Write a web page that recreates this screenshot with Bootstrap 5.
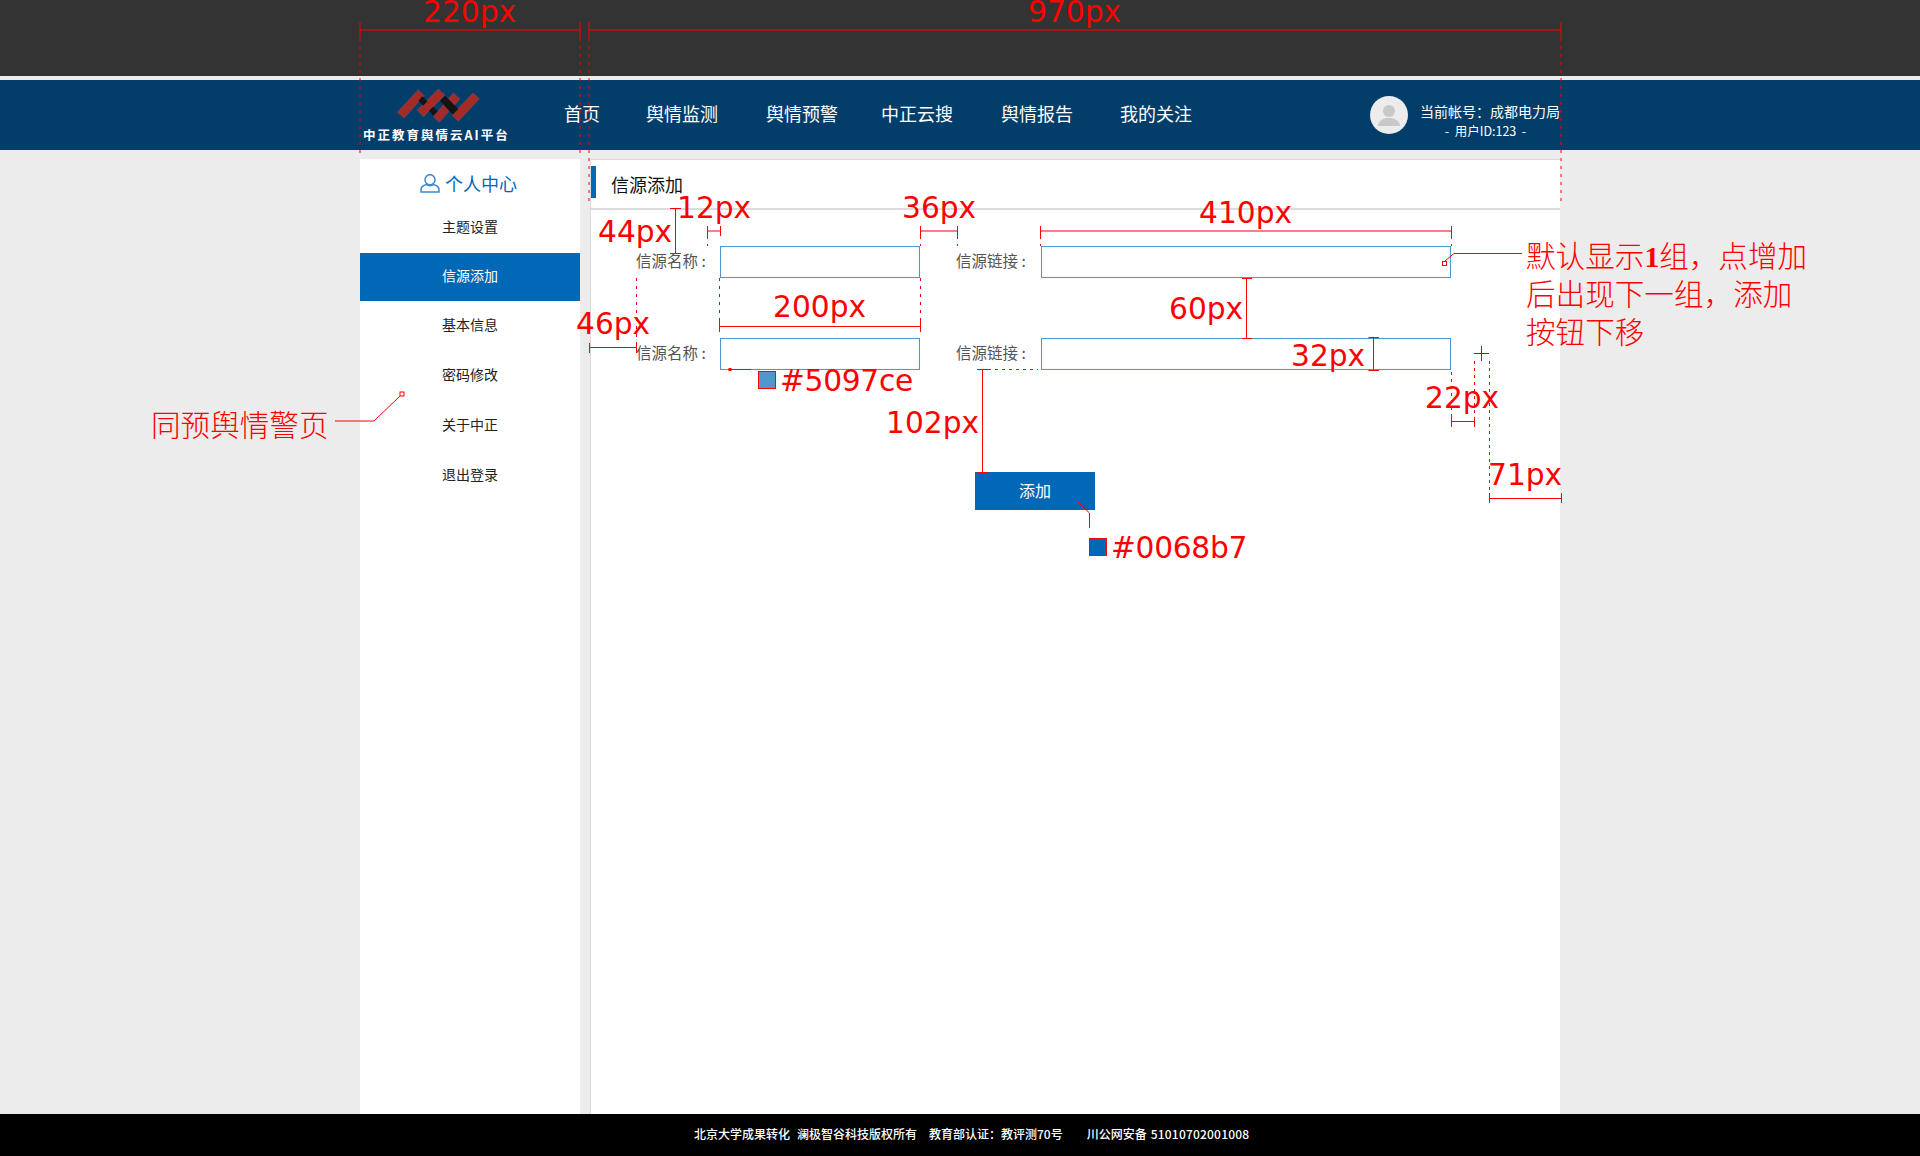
<!DOCTYPE html>
<html lang="zh">
<head>
<meta charset="utf-8">
<link href="https://cdn.jsdelivr.net/npm/bootstrap@5.3.0/dist/css/bootstrap.min.css" rel="stylesheet">
<style>
html,body{height:100%;}
body{background:#ececec;font-family:"Noto Sans CJK SC","Liberation Sans",sans-serif;position:relative;min-height:1156px;overflow:hidden;}
.topdark{height:76px;background:#333;}
.topgap{height:4px;background:#ececec;}
.hdr{height:70px;background:#033e6b;color:#fff;}
.wrap{width:1200px;margin-left:360px;}
.logo-box{width:204px;height:70px;flex:none;}
.logo-svg{position:absolute;left:37px;top:9px;}
.logo-txt{position:absolute;left:3px;top:46px;font-size:12.5px;font-weight:700;letter-spacing:2px;line-height:18px;white-space:nowrap;}
.mainnav{margin-top:-5px;}
.mainnav a{color:#fff;font-size:18px;line-height:26px;text-decoration:none;white-space:nowrap;}
.mainnav a.g1{margin-left:46px}.mainnav a.g2{margin-left:48px}.mainnav a.g3{margin-left:43px}.mainnav a.g4{margin-left:48px}.mainnav a.g5{margin-left:47px}
.acct{margin-left:auto;width:190px;}
.avatar{width:38px;height:38px;border-radius:50%;background:#ececec;flex:none;overflow:hidden;}
.acct-txt{margin-top:11px;}
.acct-l1{font-size:14px;line-height:20px;white-space:nowrap;}
.acct-l2{font-size:12.5px;line-height:20px;text-align:center;white-space:pre;padding-right:9px;}
.body-row{height:964px;padding-top:9px;}
.side{width:220px;height:955px;background:#fff;flex:none;}
.side-title{height:44px;padding:4px 3px 0 0;gap:5px;color:#0068b7;font-size:18px;line-height:40px;}
.side-item{height:50px;line-height:46px;font-size:14px;color:#222;text-align:center;display:block;text-decoration:none;}
.side-item.on{height:48px;line-height:45px;background:#0068b7;color:#fff;}
.main-col{width:970px;height:955px;margin-left:10px;background:#fff;border-left:1px solid #dcdcdc;border-top:1px solid #dcdcdc;flex:none;}
.title-bar{height:50px;border-bottom:2px solid #dcdcdc;padding:6px 0 0 0;}
.title-mark{width:5px;height:32px;background:#0068b7;}
.title-txt{font-size:18px;color:#111;margin-left:15px;line-height:36px;}
.form-area{padding-top:36px;padding-left:45px;}
.frow{height:32px;margin-bottom:60px;}
.frow:last-of-type{margin-bottom:0;}
.flabel{width:84px;font-size:15.5px;color:#555;line-height:28px;white-space:pre;flex:none;}
.flabel2{width:85px;margin-left:36px;}
.finput{height:32px;border:1px solid #5097ce;border-radius:0;background:#fff;padding:0 6px;box-shadow:inset 0 0 3px rgba(80,151,206,.15);flex:none;}
.w200{width:200px;}.w410{width:410px;}
.addbtn{width:120px;height:38px;margin:102px 0 0 339px;background:#0068b7;color:#fff;border:0;border-radius:0;font-size:16px;padding:0 0 3px;line-height:32px;display:block;}
.foot{height:42px;background:#000;color:#fff;font-size:12px;line-height:40px;font-weight:500;padding-left:694px;white-space:nowrap;}
.foot-a{margin-left:7px;}.foot-b{margin-left:12px;}.foot-c{margin-left:24px;}.foot-d{margin-left:4px;letter-spacing:.2px;}
.anno{position:absolute;inset:0;pointer-events:none;}
.ntxt{position:absolute;color:#f00;font-family:"DejaVu Sans",sans-serif;font-size:29.7px;line-height:34px;white-space:nowrap;}
.ntxt.hexv{letter-spacing:-.3px;}
.ntxt-cn{position:absolute;color:#f00;font-family:"Noto Sans CJK SC",sans-serif;font-weight:300;font-size:29.6px;line-height:38px;white-space:nowrap;}
.one{font-family:"Liberation Serif",serif;font-weight:700;line-height:0;}
.swatch{position:absolute;width:18px;height:18px;border:1px solid #f00;}
.sw1{left:758px;top:371px;background:#5097ce;}
.sw2{left:1089px;top:538px;background:#0068b7;}
</style>
</head>
<body>
<div class="topdark"></div>
<div class="topgap"></div>
<header class="hdr">
  <div class="wrap d-flex align-items-center h-100">
    <div class="logo-box position-relative">
      <svg class="logo-svg" width="84" height="36" viewBox="0 0 84 36">
        <g fill="#a52b27" stroke="#6f5560" stroke-width=".5"><polygon points="0.300,23.300 21.300,0.700 27.300,6.700 7,29"/><polygon points="20.300,21 41.300,0 48,6 26.300,27.700"/><polygon points="36.300,27.700 56.300,4 63,10 42.300,33.300"/><polygon points="54.700,25.700 76.300,4 82.300,10 61.300,32.300"/></g>
        <g fill="#141414"><polygon points="21.300,11.700 25.300,7.300 30.300,12.300 26.300,16.700"/><polygon points="32,21.700 36.300,17.700 40.700,22.300 36.300,26.700"/><polygon points="43,11.700 48,6.700 61.300,20 55.700,25.700"/></g>
      </svg>
      <div class="logo-txt">中正教育舆情云AI平台</div>
    </div>
    <nav class="mainnav d-flex">
      <a href="#">首页</a><a class="g1" href="#">舆情监测</a><a class="g2" href="#">舆情预警</a><a class="g3" href="#">中正云搜</a><a class="g4" href="#">舆情报告</a><a class="g5" href="#">我的关注</a>
    </nav>
    <div class="acct d-flex align-items-center">
      <div class="avatar"><svg width="38" height="38" viewBox="0 0 38 38"><circle cx="19" cy="15" r="6" fill="#c8c8c8"/><path d="M8 30c0-5 5-7 8-8h6c3 1 8 3 8 8z" fill="#c8c8c8"/></svg></div>
      <div class="ms-2 ps-1 acct-txt">
        <div class="acct-l1">当前帐号：成都电力局</div>
        <div class="acct-l2">-  用户ID:123  -</div>
      </div>
    </div>
  </div>
</header>
<div class="body-row">
  <div class="wrap d-flex">
    <aside class="side">
      <div class="side-title d-flex justify-content-center align-items-center">
        <svg width="20" height="19" viewBox="0 0 20 19" fill="none" stroke="#3a8ad0" stroke-width="1.500"><ellipse cx="10" cy="5.700" rx="5" ry="5"/><path d="M6.500 10.500C3 11.500 1 13 1 15.500V18H19V15.500C19 13 17 11.500 13.500 10.500C12 12 8 12 6.500 10.500Z"/></svg>
        <span>个人中心</span>
      </div>
      <a class="side-item" href="#">主题设置</a>
      <a class="side-item on" href="#">信源添加</a>
      <a class="side-item" href="#">基本信息</a>
      <a class="side-item" href="#">密码修改</a>
      <a class="side-item" href="#">关于中正</a>
      <a class="side-item" href="#">退出登录</a>
    </aside>
    <main class="main-col">
      <div class="title-bar d-flex"><div class="title-mark"></div><div class="title-txt">信源添加</div></div>
      <div class="form-area">
        <div class="frow d-flex">
          <div class="flabel">信源名称 :</div><div class="finput w200"></div>
          <div class="flabel flabel2">信源链接 :</div><div class="finput w410"></div>
        </div>
        <div class="frow d-flex">
          <div class="flabel">信源名称 :</div><div class="finput w200"></div>
          <div class="flabel flabel2">信源链接 :</div><div class="finput w410"></div>
        </div>
        <button type="button" class="btn addbtn">添加</button>
      </div>
    </main>
  </div>
</div>
<footer class="foot"><span>北京大学成果转化</span><span class="foot-a">澜极智谷科技版权所有</span><span class="foot-b">教育部认证：教评测70号</span><span class="foot-c">川公网安备</span><span class="foot-d">51010702001008</span></footer>

<div class="anno">
  <svg width="1920" height="1156" class="position-absolute top-0 start-0" fill="none" stroke="#f00" stroke-width="1">
    <path d="M360 22V38M360 30H580M580 22V38M589 30H1561M589 22V38M1561 22V38"/>
    <path stroke-dasharray="3 5" d="M360 38V156M580 38V156M589 38V204M1561 38V204"/>
    <path d="M670 208.500H681M675.500 208V253M670 253.500H681"/>
    <path d="M707.500 226V236M707.500 231H720M720.500 226V236"/>
    <path d="M920.500 226V236M920.500 231H957M957.500 226V236M1040.500 226V236M1040.500 231H1451M1451.500 226V236"/>
    <path stroke-dasharray="3 5" d="M707.500 236V246M920.500 236V246M957.500 236V246M1040.500 236V246M1451.500 236V246"/>
    <path d="M719.500 321V332M719.500 326.500H920M920.500 321V332"/>
    <path stroke-dasharray="3 5" d="M636.500 278V343M719.500 278V321M920.500 278V321"/>
    <path d="M589.500 343V353M589.500 347.500H636M636.500 343V353"/>
    <path d="M1246.500 278V338M1242 278.500H1252M1242 338.500H1252"/>
    <path d="M1368.500 337.500H1379M1368.500 370.500H1379M1373.500 337V370"/>
    <path d="M982.500 370V472M977 369.500H988M977 472.500H988"/>
    <path stroke-dasharray="3 4" d="M988 369.500H1038"/>
    <path stroke-dasharray="3 4" d="M1451.500 372V417M1474.500 361V417M1489.500 361V493"/>
    <path stroke="#8a2525" d="M1474 353.500H1489M1481.500 346V361"/>
    <path d="M1451.500 417V427M1451.500 421.500H1474M1474.500 417V427"/>
    <path d="M1489.500 493V503M1489.500 498.500H1561M1561.500 493V503"/>
    <path d="M1522 253.500H1454L1445 261"/>
    <rect x="1442.500" y="261.500" width="4" height="4"/>
    <path d="M335 421H374L400 396"/>
    <rect x="400" y="392" width="4" height="4"/>
    <path d="M730 369.500H751"/>
    <rect x="729" y="368.500" width="2" height="2" fill="#f00"/>
    <path d="M1078 502L1089.500 513V528"/>
  </svg>
  <div class="ntxt" style="left:423px;top:-5px">220px</div>
  <div class="ntxt" style="left:1028px;top:-5px">970px</div>
  <div class="ntxt" style="left:677px;top:191px">12px</div>
  <div class="ntxt" style="left:902px;top:191px">36px</div>
  <div class="ntxt" style="left:1199px;top:196px">410px</div>
  <div class="ntxt" style="left:598px;top:215px">44px</div>
  <div class="ntxt" style="left:773px;top:290px">200px</div>
  <div class="ntxt" style="left:576px;top:307px">46px</div>
  <div class="ntxt" style="left:1169px;top:292px">60px</div>
  <div class="ntxt" style="left:1291px;top:339px">32px</div>
  <div class="ntxt" style="left:1425px;top:381px">22px</div>
  <div class="ntxt" style="left:1488px;top:458px">71px</div>
  <div class="ntxt" style="left:886px;top:406px">102px</div>
  <div class="ntxt hexv" style="left:780px;top:364px">#5097ce</div>
  <div class="ntxt hexv" style="left:1111px;top:531px">#0068b7</div>
  <div class="swatch sw1"></div>
  <div class="swatch sw2"></div>
  <div class="ntxt-cn" style="left:151px;top:405px">同预舆情警页</div>
  <div class="ntxt-cn" style="left:1526px;top:236px">默认显示<span class="one">1</span>组，点增加<br>后出现下一组，添加<br>按钮下移</div>
</div>
<script src="https://cdn.jsdelivr.net/npm/bootstrap@5.3.0/dist/js/bootstrap.bundle.min.js"></script>
</body>
</html>
